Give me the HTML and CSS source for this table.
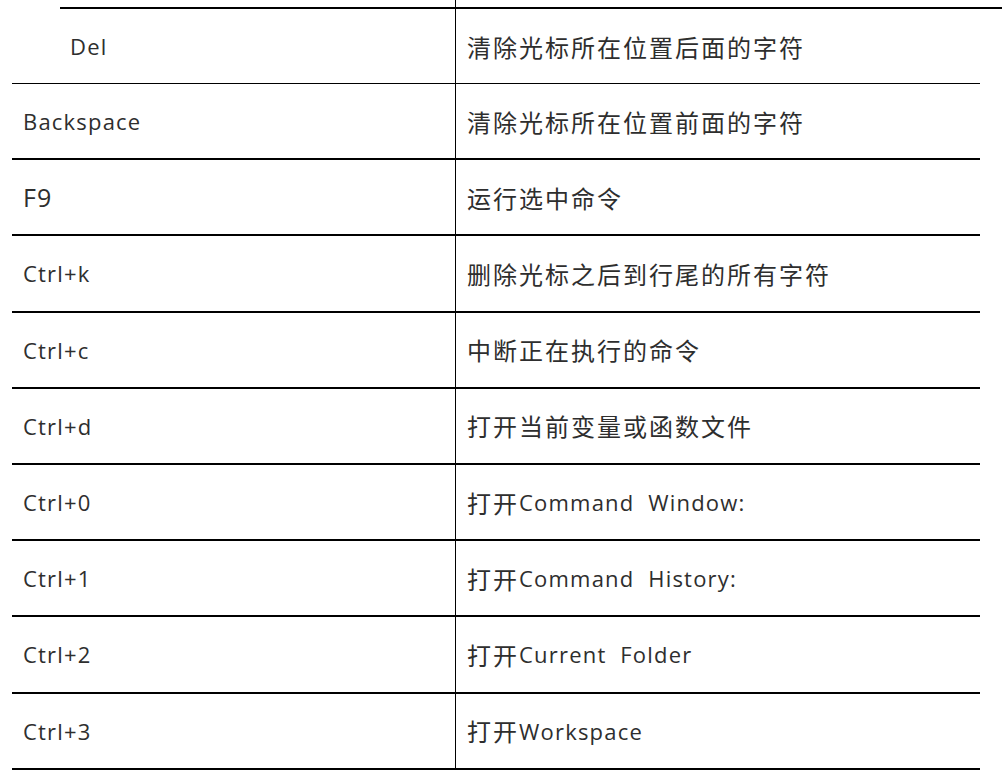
FILE: index.html
```html
<!DOCTYPE html>
<html lang="zh">
<head>
<meta charset="utf-8">
<link rel="stylesheet" href="styles.css">
</head>
<body>
<div class="sheet">
  <div class="stub"><div></div><div class="stub-r"></div></div>
  <div class="top-rule"></div>
  <div class="row thin"><div class="k indent">Del</div><div class="v"><span class="zh">清除光标所在位置后面的字符</span></div></div>
  <div class="row"><div class="k">Backspace</div><div class="v"><span class="zh">清除光标所在位置前面的字符</span></div></div>
  <div class="row"><div class="k big">F9</div><div class="v"><span class="zh">运行选中命令</span></div></div>
  <div class="row"><div class="k">Ctrl+k</div><div class="v"><span class="zh">删除光标之后到行尾的所有字符</span></div></div>
  <div class="row"><div class="k">Ctrl+c</div><div class="v"><span class="zh">中断正在执行的命令</span></div></div>
  <div class="row"><div class="k">Ctrl+d</div><div class="v"><span class="zh">打开当前变量或函数文件</span></div></div>
  <div class="row"><div class="k">Ctrl+0</div><div class="v"><span class="zh">打开</span>Command&nbsp; Window:</div></div>
  <div class="row"><div class="k">Ctrl+1</div><div class="v"><span class="zh">打开</span>Command&nbsp; History:</div></div>
  <div class="row"><div class="k">Ctrl+2</div><div class="v"><span class="zh">打开</span>Current&nbsp; Folder</div></div>
  <div class="row"><div class="k">Ctrl+3</div><div class="v"><span class="zh">打开</span>Workspace</div></div>
</div>
</body>
</html>
```
FILE: styles.css
```css
html, body {
  margin: 0;
  padding: 0;
  background: #fff;
}
body {
  font-family: "Open Sans", "Noto Sans CJK SC", sans-serif;
  color: #2e2e2e;
}
.sheet {
  margin-left: 12px;
  width: 968px;
}
.stub {
  display: grid;
  grid-template-columns: 443px 1fr;
  height: 7px;
}
.stub-r {
  border-left: 1px solid #000;
}
.top-rule {
  margin-left: 48px;
  margin-right: -22px;
  border-top: 2px solid #000;
}
.row {
  display: grid;
  grid-template-columns: 443px 1fr;
  height: 76.2px;
  box-sizing: border-box;
  border-bottom: 2px solid #000;
}
.row.thin {
  height: 75px;
  border-bottom-width: 1px;
}
.k, .v {
  display: flex;
  align-items: center;
  font-size: 22px;
  letter-spacing: 1.2px;
  white-space: pre;
}
.k {
  padding-left: 11px;
}
.k.indent {
  padding-left: 58px;
}
.k.big {
  font-size: 25px;
  letter-spacing: 1px;
}
.v {
  border-left: 1px solid #000;
  padding-left: 11px;
}
.zh {
  font-family: "Noto Sans CJK SC", sans-serif;
  font-size: 24px;
  letter-spacing: 2px;
}
```
